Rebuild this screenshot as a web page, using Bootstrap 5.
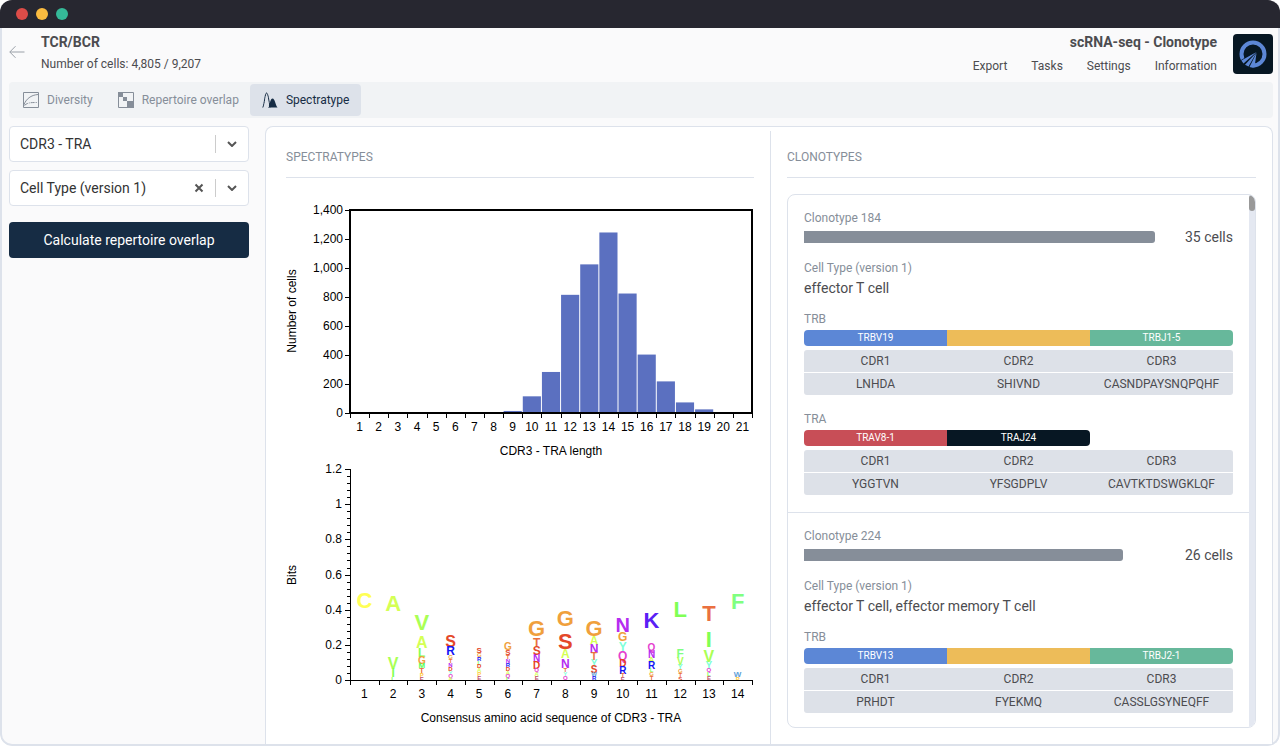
<!DOCTYPE html>
<html lang="en">
<head>
<meta charset="utf-8">
<meta name="viewport" content="width=device-width, initial-scale=1">
<title>TCR/BCR - Spectratype</title>
<link href="https://cdn.jsdelivr.net/npm/bootstrap@5.3.0/dist/css/bootstrap.min.css" rel="stylesheet">
<style>
:root { --line: #dde2eb; --navy: #162c44; --muted: #868e99; --ink: #4c4c50; }
body { font-family: Roboto, "Liberation Sans", sans-serif; font-size: 12px; line-height: 14px; color: var(--ink); background: #fff; }
.app-window { border-radius: 12px; background: #fafafb; }
.app-title { height: 28px; background: #272730; padding-left: 16px; }
.app-dot { width: 12px; height: 12px; border-radius: 50%; }
.app-frame { border: 2px solid var(--line); border-top: 0; border-radius: 0 0 12px 12px; padding: 0 5px 0 7px; min-height: 0; }
.app-head { height: 54px; padding-top: 6px; }
.back-link { width: 32px; padding-top: 10px; }
.head-title { font-size: 14px; line-height: 16px; font-weight: 700; margin: 0 0 7px; }
.head-nav { gap: 24px; margin-top: 9px; }
.head-nav a { color: var(--ink); text-decoration: none; }
.head-text { padding-right: 16px; }
.head-text .head-title { margin: 0; }
.tool-tabs { background: #f1f3f5; border-radius: 4px; height: 36px; padding: 2px 0; }
.tool-tabs .btn { font-size: 12px; line-height: 16px; color: var(--muted); border: 0; border-radius: 4px; padding: 8px 11px 8px 14px; gap: 8px; }
.tool-tabs .btn.active { background: #dde2ea; color: var(--navy); padding: 8px 12px; }
.work-row { flex: 1 1 0; min-height: 0; }
.side-col { width: 240px; }
.pick-box { height: 36px; border: 1px solid var(--line); border-radius: 4px; background: #fff; }
.pick-box select { appearance: none; border: 0; background: none; font-size: 14px; line-height: 20px; color: #333; padding: 0 10px; outline: 0; }
.pick-line { width: 1px; height: 18px; background: #ccc; }
.pick-box .btn { border: 0; padding: 0; width: 32px; line-height: 0; color: #555; }
.calc-btn { height: 36px; background: var(--navy); color: #fff; font-size: 14px; border-radius: 4px; padding: 0; margin-top: 8px; }
.calc-btn:hover { background: #203c5b; color: #fff; }
.result-panel { background: #fff; border: 1px solid var(--line); border-bottom: 0; border-radius: 8px 8px 0 0; min-height: 0; }
.spectra-col { width: 50.1%; padding: 0 16px 0 20px; }
.clono-col { flex: 1; padding: 0 16px; min-width: 0; min-height: 0; border-left: 1px solid var(--line); margin-top: 4px; }
.sec-title { font-size: 12px; line-height: 14px; font-weight: 400; color: var(--muted); margin: 0; padding: 19px 0 13px; border-bottom: 1px solid var(--line); }
.spectra-col .sec-title { padding-top: 23px; }
.clono-box { border: 1px solid var(--line); border-radius: 8px; margin: 16px 0; min-height: 0; overflow: hidden; }
.scroll-track { width: 6px; flex-shrink: 0; background: #e4e8f1; }
.scroll-thumb { height: 16px; border-radius: 3px; background: #999; }
.clono-item { padding: 16px 16px 17px; border-bottom: 1px solid var(--line); }
.clono-item:last-child { border-bottom: 0; }
.soft-label { color: var(--muted); }
.size-row { height: 20px; margin-top: 2px; }
.size-bar { height: 12px; background: #868e99; border-radius: 0 3px 3px 0; }
.size-text { width: 78px; }
.item-text { font-size: 14px; line-height: 20px; }
.gap-top { margin-top: 14px; }
.type-text { margin-top: 3px; }
.next-chain { margin-top: 17px; }
.gene-strip { height: 16px; margin: 4px 0; border-radius: 4px; overflow: hidden; }
.gene-strip div { flex: 1; font-size: 10px; line-height: 16px; text-align: center; color: #fff; }
.gene-strip.two-genes { width: 66.667%; }
.g-blue { background: #5c87d6; } .g-gold { background: #edbc59; } .g-green { background: #67b89b; }
.g-red { background: #c84e57; } .g-dark { background: #071723; }
.cdr-table { width: 100%; table-layout: fixed; text-align: center; background: #dde1e8; border-radius: 3px; border-collapse: separate; border-spacing: 0; }
.cdr-table th, .cdr-table td { font-weight: 400; padding: 4px 0; }
.cdr-table td { border-top: 1px solid #fff; }
.chart { display: block; width: 100%; font-family: "Liberation Sans", sans-serif; font-size: 12px; }
.chart text { fill: #000; }
.chart .tick-end { text-anchor: end; }
.chart .tick-mid { text-anchor: middle; }
</style>
</head>
<body>
<div class="app-window vh-100 d-flex flex-column overflow-hidden">
  <div class="app-title flex-shrink-0 d-flex align-items-center gap-2">
    <span class="app-dot" style="background:#dc4c48"></span><span class="app-dot" style="background:#fbbc40"></span><span class="app-dot" style="background:#35b998"></span>
  </div>
  <div class="app-frame flex-grow-1 d-flex flex-column">
    <header class="app-head flex-shrink-0 d-flex">
      <a class="back-link" href="#" aria-label="Back"><svg width="16" height="16" viewBox="0 0 16 16" fill="none" stroke="#9aa0a8" stroke-width="1"><path d="M15.500 8H.8M6.500 2.200.8 8l5.700 5.800"/></svg></a>
      <div>
        <h1 class="head-title">TCR/BCR</h1>
        <div>Number of cells: 4,805 / 9,207</div>
      </div>
      <div class="head-text ms-auto">
        <h2 class="head-title text-end">scRNA-seq - Clonotype</h2>
        <nav class="head-nav d-flex"><a href="#">Export</a><a href="#">Tasks</a><a href="#">Settings</a><a href="#">Information</a></nav>
      </div>
      <svg width="40" height="40" viewBox="0 0 40 40"><rect width="40" height="40" rx="4" fill="#071723"/><circle cx="20" cy="20" r="11.500" fill="none" stroke="#5c87d6" stroke-width="4"/><path d="M3 29 23.500 17 18 37Z" fill="#071723"/><path d="M8.300 26.500 23.500 18 10.500 29.500ZM12 30.800 23.500 18.500 15.500 32.500ZM16.500 33 23.500 19 21.500 33.500 18.500 33.500Z" fill="#5c87d6"/></svg>
    </header>
    <div class="tool-tabs flex-shrink-0 d-flex">
      <button class="btn d-flex align-items-center" type="button"><svg width="16" height="16" viewBox="0 0 16 16" fill="none" stroke="#868e99"><path d="M.5.500h15v15H.5zM.8 13C3 7 8 3 15 2.500"/><path d="M1.500 13.500C4 11 6 10.500 14 10.500" stroke-dasharray="4 1 1 1"/></svg>Diversity</button>
      <button class="btn d-flex align-items-center" type="button"><svg width="16" height="16" viewBox="0 0 16 16" fill="#868e99"><path d="M.5.500h15v15H.5z" fill="none" stroke="#868e99"/><path d="M0 0h5v5H0zM5 5h4v4H5zM9 9h7v7H9z"/></svg>Repertoire overlap</button>
      <button class="btn active d-flex align-items-center" type="button"><svg width="16" height="16" viewBox="0 0 16 16"><path d="M.8 15.500C2.500 12 3 1 4.500 1S7 9 8 15.500" fill="none" stroke="#162c44"/><path d="M.5 15.500h15C13.500 13.500 13 6.500 10.500 6.500c-2 0-2.500 5-4.500 9" fill="#162c44"/><path d="M1.800 15C3.500 12 3.500 3 4.500 3s1.500 6 2.500 12z" fill="#dde2ea"/></svg>Spectratype</button>
    </div>
    <div class="work-row d-flex gap-3 pt-2">
      <aside class="side-col flex-shrink-0 d-flex flex-column gap-2">
        <div class="pick-box d-flex align-items-center">
          <select class="flex-grow-1" aria-label="Chain"><option>CDR3 - TRA</option></select>
          <span class="pick-line"></span>
          <button class="btn" type="button" aria-label="Open"><svg width="10" height="6" viewBox="0 0 10 6" fill="none" stroke="currentColor" stroke-width="2"><path d="m1 1 4 4 4-4"/></svg></button>
        </div>
        <div class="pick-box d-flex align-items-center">
          <select class="flex-grow-1" aria-label="Metadata"><option>Cell Type (version 1)</option></select>
          <button class="btn" type="button" aria-label="Clear"><svg width="10" height="10" viewBox="0 0 10 10" fill="none" stroke="currentColor" stroke-width="2"><path d="m1.500 1.500 7 7M8.500 1.500l-7 7"/></svg></button>
          <span class="pick-line"></span>
          <button class="btn" type="button" aria-label="Open"><svg width="10" height="6" viewBox="0 0 10 6" fill="none" stroke="currentColor" stroke-width="2"><path d="m1 1 4 4 4-4"/></svg></button>
        </div>
        <button class="btn calc-btn" type="button">Calculate repertoire overlap</button>
      </aside>
      <main class="result-panel flex-grow-1 d-flex">
        <section class="spectra-col flex-shrink-0">
          <h3 class="sec-title">SPECTRATYPES</h3>
          <svg class="chart pt-3" id="lengthChart" viewBox="286 194 468 264"></svg>
          <svg class="chart" id="logoChart" viewBox="286 458 468 276"></svg>
        </section>
        <section class="clono-col d-flex flex-column">
          <h3 class="sec-title">CLONOTYPES</h3>
          <div class="clono-box d-flex flex-grow-1">
            <div class="flex-grow-1">
              <article class="clono-item">
                <div class="soft-label">Clonotype 184</div>
                <div class="size-row d-flex align-items-center"><div class="flex-grow-1"><div class="size-bar" style="width:100%"></div></div><div class="size-text item-text text-end">35 cells</div></div>
                <div class="soft-label gap-top">Cell Type (version 1)</div>
                <div class="item-text type-text">effector T cell</div>
                <div class="soft-label gap-top">TRB</div>
                <div class="gene-strip d-flex"><div class="g-blue">TRBV19</div><div class="g-gold"></div><div class="g-green">TRBJ1-5</div></div>
                <table class="cdr-table"><thead><tr><th>CDR1</th><th>CDR2</th><th>CDR3</th></tr></thead><tbody><tr><td>LNHDA</td><td>SHIVND</td><td>CASNDPAYSNQPQHF</td></tr></tbody></table>
                <div class="soft-label next-chain">TRA</div>
                <div class="gene-strip two-genes d-flex"><div class="g-red">TRAV8-1</div><div class="g-dark">TRAJ24</div></div>
                <table class="cdr-table"><thead><tr><th>CDR1</th><th>CDR2</th><th>CDR3</th></tr></thead><tbody><tr><td>YGGTVN</td><td>YFSGDPLV</td><td>CAVTKTDSWGKLQF</td></tr></tbody></table>
              </article>
              <article class="clono-item">
                <div class="soft-label">Clonotype 224</div>
                <div class="size-row d-flex align-items-center"><div class="flex-grow-1"><div class="size-bar" style="width:91%"></div></div><div class="size-text item-text text-end">26 cells</div></div>
                <div class="soft-label gap-top">Cell Type (version 1)</div>
                <div class="item-text type-text">effector T cell, effector memory T cell</div>
                <div class="soft-label gap-top">TRB</div>
                <div class="gene-strip d-flex"><div class="g-blue">TRBV13</div><div class="g-gold"></div><div class="g-green">TRBJ2-1</div></div>
                <table class="cdr-table"><thead><tr><th>CDR1</th><th>CDR2</th><th>CDR3</th></tr></thead><tbody><tr><td>PRHDT</td><td>FYEKMQ</td><td>CASSLGSYNEQFF</td></tr></tbody></table>
              </article>
            </div>
            <div class="scroll-track"><div class="scroll-thumb"></div></div>
          </div>
        </section>
      </main>
    </div>
  </div>
</div>
<script src="https://cdn.jsdelivr.net/npm/bootstrap@5.3.0/dist/js/bootstrap.bundle.min.js"></script>
<script>
const LEFT = 350, RIGHT = 752;
const line = (x1, y1, x2, y2) => `<path d="M${x1} ${y1}L${x2} ${y2}" stroke="#000"/>`;
const label = (x, y, cls, t) => `<text x="${x}" y="${y}" class="${cls}">${t}</text>`;
const sideTitle = (y, t) => `<text transform="translate(296 ${y}) rotate(-90)" class="tick-mid">${t}</text>`;

// Histogram of CDR3 lengths
(() => {
  const counts = [0,0,0,0,0,0,0,0,14,115,283,815,1025,1245,824,403,218,73,25,0,0];
  const base = 413, unit = 203 / 1400, step = (RIGHT - LEFT) / counts.length;
  let s = '';
  counts.forEach((n, i) => {
    const x = LEFT + i * step;
    if (n) s += `<rect x="${x + .5}" y="${base - n * unit}" width="${step - 1}" height="${n * unit}" fill="#5b70c0"/>`;
    s += line(Math.round(x) + .5, base, Math.round(x) + .5, base + 5) + label(x + step / 2, 431, 'tick-mid', i + 1);
  });
  s += line(RIGHT + .5, base, RIGHT + .5, base + 5);
  for (let v = 0; v <= 1400; v += 200) {
    const y = Math.round(base - v * unit);
    s += line(345, y + .5, LEFT, y + .5) + label(343, y + 4, 'tick-end', v.toLocaleString('en-US'));
  }
  s += `<rect x="350" y="210" width="402" height="203" fill="none" stroke="#000" stroke-width="2"/>`;
  s += label(551, 455, 'tick-mid', 'CDR3 - TRA length') + sideTitle(311, 'Number of cells');
  lengthChart.innerHTML = s;
})();

// Sequence logo: one stack of residues per position, each with its height in pixels
(() => {
  const colours = {C:'#ffff55',A:'#d4ff55',V:'#aaff55',L:'#80ff55',I:'#80ff55',M:'#55ff55',F:'#80ff80',G:'#f0a03c',T:'#ea7040',S:'#e4482a',
    N:'#b52cf0',K:'#5a20f5',Q:'#e540cf',D:'#e64020',R:'#1414f5',Y:'#80ffd8',W:'#60a0d8',E:'#c05068',P:'#ffc840'};
  const stacks = ['C159','A110 V11 I8 L3','V29 A11 L9 G6 M5 T5 P4 E3','S12 R8 G4 T4 N4 D4 Y3 Q3 A3','S5 G4 R4 L3 D4 A4 P4 E4','G7 S5 T4 N4 R4 D4 A3 Q3 L3',
    'G20 T9 S8 N7 D6 Q4 A4 E4','G32 S15 A10 N9 T4 Y4 Q4','G16 A9 N8 T7 Y6 S6 W4 R4','N14 G10 Y10 Q8 D7 R6 T4 E3','K48 Q7 N6 A5 R6 L4 G4 T4',
    'L82 F8 V6 Y5 G4 T4 S3','T28 I24 V11 Y6 Q4 L4 E4','F142 W5 P3'];
  const sizes = [22, 20, 16, 12, 10, 8, 6];
  const base = 680, step = (RIGHT - LEFT) / stacks.length;
  let s = '';
  stacks.forEach((stack, i) => {
    const parts = stack.split(' ').map(p => [p[0], +p.slice(1)]);
    const mid = LEFT + (i + .5) * step;
    let y = base - parts.reduce((a, p) => a + p[1], 0);
    parts.forEach(([c, h]) => {
      const size = sizes.find(z => z * .7 <= h + 1) || 6;
      s += `<text x="${mid}" y="${Math.round(y + h / 2 + size * .36)}" class="tick-mid" font-weight="700" font-size="${size}" style="fill:${colours[c]}">${c}</text>`;
      y += h;
    });
    const x = Math.round(LEFT + i * step) + .5;
    s += line(x, base, x, base + 5) + label(mid, 698, 'tick-mid', i + 1);
  });
  s += line(RIGHT + .5, base, RIGHT + .5, base + 5);
  for (let k = 0; k <= 30; k++) {
    const y = Math.round(base - k * 7.03) + .5, major = k % 5 === 0;
    s += line(major ? 345 : 347, y, LEFT, y);
    if (major) s += label(342, y + 3.5, 'tick-end', k / 25);
  }
  s += line(350.5, 469, 350.5, base) + line(LEFT, base + .5, RIGHT, base + .5);
  s += label(551, 722, 'tick-mid', 'Consensus amino acid sequence of CDR3 - TRA') + sideTitle(575, 'Bits');
  logoChart.innerHTML = s;
})();
</script>
</body>
</html>
